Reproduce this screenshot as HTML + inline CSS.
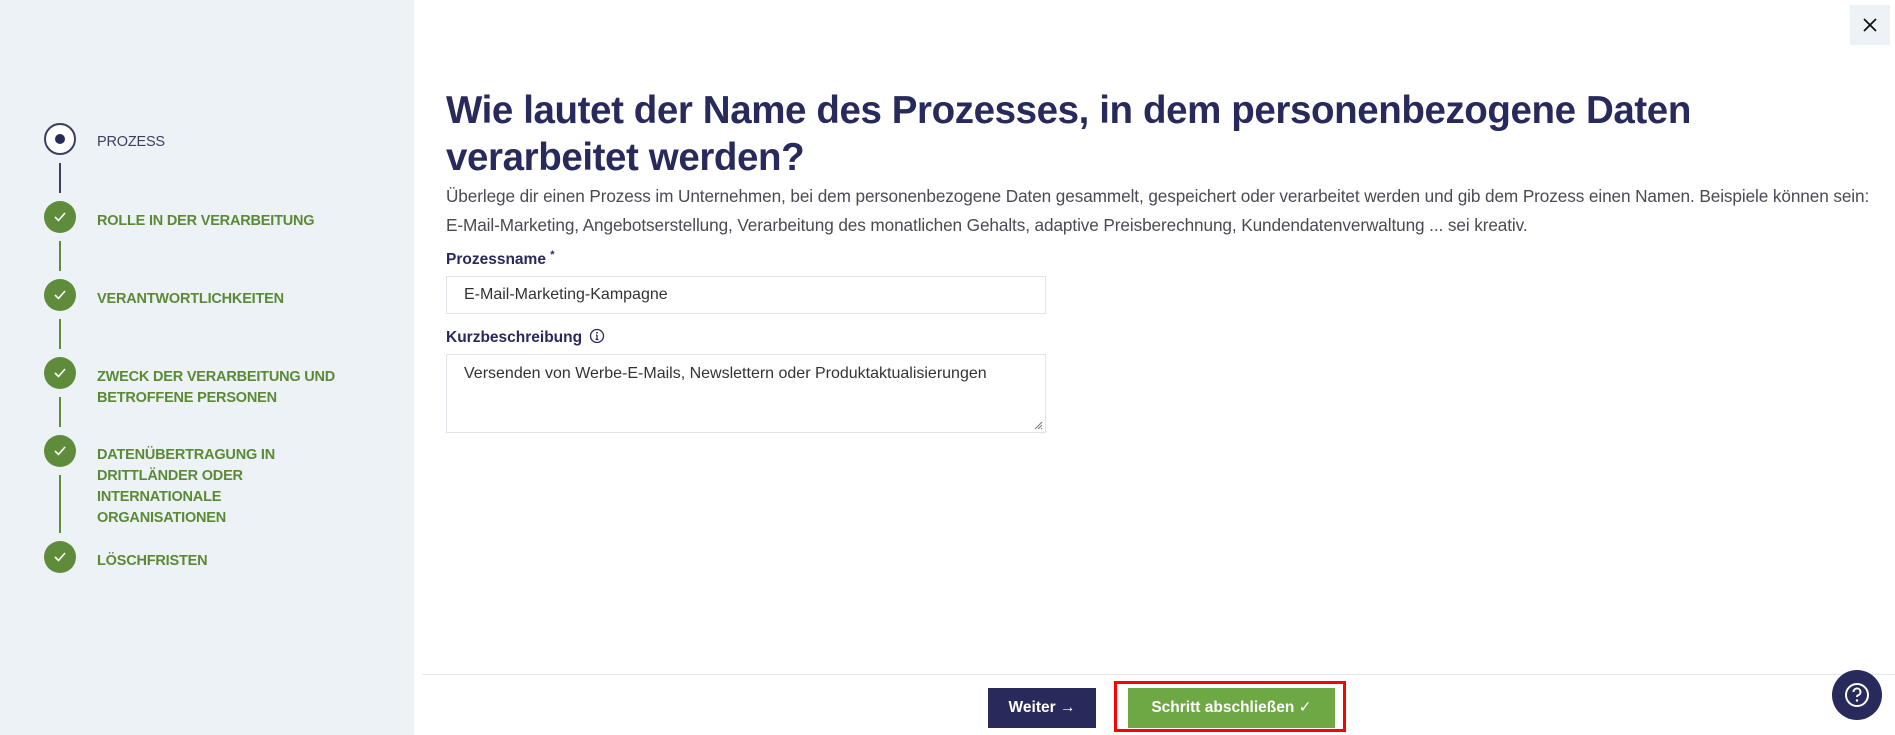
<!DOCTYPE html>
<html><head><meta charset="utf-8"><style>
*{box-sizing:border-box;margin:0;padding:0}
body{width:1895px;height:735px;overflow:hidden;background:#fff;font-family:"Liberation Sans",sans-serif;position:relative}
.side{position:absolute;left:0;top:0;width:414px;height:735px;background:#edf2f7}
.c{position:absolute;left:44px;width:32px;height:32px;border-radius:50%;background:#5e8c3a}
.c svg{position:absolute;left:9px;top:10px}
.ln{position:absolute;left:59px;width:2px;background:#5e8c3a}
.t{position:absolute;left:97px;font-size:14.5px;font-weight:bold;color:#5b8a35;line-height:21px;letter-spacing:-0.2px}
h1{position:absolute;left:446px;top:87px;font-size:38.5px;line-height:47px;color:#272a5b;font-weight:bold;letter-spacing:-0.4px}
.p{position:absolute;left:446px;top:182px;font-size:17.2px;line-height:29px;color:#4a4a55;letter-spacing:-0.1px;white-space:nowrap}
.lab{position:absolute;left:446px;font-size:15.5px;font-weight:bold;color:#272a5b}
.inp{position:absolute;left:446px;width:600px;border:1px solid #dfe3ea;font-size:16px;color:#333;padding-left:17px}
</style></head><body>
<div class="side">
 <div style="position:absolute;left:44px;top:123px;width:32px;height:32px;border-radius:50%;border:2px solid #3c3f5e;background:#fff"><div style="position:absolute;left:9px;top:9px;width:10px;height:10px;border-radius:50%;background:#272a5b"></div></div>
 <div class="t" style="top:132px;color:#3c3f5e;font-weight:normal">PROZESS</div>
 <div class="ln" style="top:163px;height:30px;background:#3c3f5e"></div>
 <div class="c" style="top:201px"><svg width="14" height="12" viewBox="0 0 14 12"><path d="M2 6l3.5 3.5L12 2" stroke="#fff" stroke-width="1.6" fill="none"/></svg></div>
 <div class="t" style="top:211px">ROLLE IN DER VERARBEITUNG</div>
 <div class="ln" style="top:241px;height:30px"></div>
 <div class="c" style="top:279px"><svg width="14" height="12" viewBox="0 0 14 12"><path d="M2 6l3.5 3.5L12 2" stroke="#fff" stroke-width="1.6" fill="none"/></svg></div>
 <div class="t" style="top:289px">VERANTWORTLICHKEITEN</div>
 <div class="ln" style="top:319px;height:30px"></div>
 <div class="c" style="top:357px"><svg width="14" height="12" viewBox="0 0 14 12"><path d="M2 6l3.5 3.5L12 2" stroke="#fff" stroke-width="1.6" fill="none"/></svg></div>
 <div class="t" style="top:367px">ZWECK DER VERARBEITUNG UND<br>BETROFFENE PERSONEN</div>
 <div class="ln" style="top:397px;height:30px"></div>
 <div class="c" style="top:435px"><svg width="14" height="12" viewBox="0 0 14 12"><path d="M2 6l3.5 3.5L12 2" stroke="#fff" stroke-width="1.6" fill="none"/></svg></div>
 <div class="t" style="top:445px">DATENÜBERTRAGUNG IN<br>DRITTLÄNDER ODER<br>INTERNATIONALE<br>ORGANISATIONEN</div>
 <div class="ln" style="top:475px;height:58px"></div>
 <div class="c" style="top:541px"><svg width="14" height="12" viewBox="0 0 14 12"><path d="M2 6l3.5 3.5L12 2" stroke="#fff" stroke-width="1.6" fill="none"/></svg></div>
 <div class="t" style="top:551px">LÖSCHFRISTEN</div>
</div>
<div style="position:absolute;left:1850px;top:5px;width:40px;height:40px;background:#edf2f7"><svg width="40" height="40"><path d="M14 14l12 12M26 14l-12 12" stroke="#111" stroke-width="1.8"/></svg></div>
<h1>Wie lautet der Name des Prozesses, in dem personenbezogene Daten<br>verarbeitet werden?</h1>
<div class="p">Überlege dir einen Prozess im Unternehmen, bei dem personenbezogene Daten gesammelt, gespeichert oder verarbeitet werden und gib dem Prozess einen Namen. Beispiele können sein:<br>E-Mail-Marketing, Angebotserstellung, Verarbeitung des monatlichen Gehalts, adaptive Preisberechnung, Kundendatenverwaltung ... sei kreativ.</div>
<div class="lab" style="top:249px">Prozessname <sup style="font-size:11px">*</sup></div>
<div class="inp" style="top:276px;height:38px;line-height:36px">E-Mail-Marketing-Kampagne</div>
<div class="lab" style="top:328px">Kurzbeschreibung <svg width="16" height="16" style="vertical-align:-2px;margin-left:3px"><circle cx="8" cy="8" r="6.5" stroke="#272a5b" stroke-width="1.3" fill="none"/><path d="M8 7v4.5M6.5 11.5h3M7 7h1" stroke="#272a5b" stroke-width="1.3"/><circle cx="8" cy="4.8" r="0.9" fill="#272a5b"/></svg></div>
<div class="inp" style="top:354px;height:79px;padding-top:9px;line-height:20px">Versenden von Werbe-E-Mails, Newslettern oder Produktaktualisierungen
<svg width="10" height="10" style="position:absolute;right:2px;bottom:2px"><path d="M9 2L2 9M9 5L5 9M9 8L8 9" stroke="#777" stroke-width="1"/></svg></div>
<div style="position:absolute;left:422px;top:674px;width:1473px;height:1px;background:#e3e6ee"></div>
<div style="position:absolute;left:988px;top:688px;width:108px;height:40px;background:#272a5b;color:#fff;font-weight:bold;font-size:15.5px;line-height:40px;text-align:center">Weiter →</div>
<div style="position:absolute;left:1114px;top:681px;width:232px;height:51px;border:3px solid #f00"></div>
<div style="position:absolute;left:1128px;top:688px;width:207px;height:40px;background:#6ea845;color:#fff;font-weight:bold;font-size:15.5px;line-height:40px;text-align:center">Schritt abschließen <span style="font-weight:normal">✓</span></div>
<div style="position:absolute;left:1832px;top:670px;width:50px;height:50px;border-radius:50%;background:#272a5b"><svg width="50" height="50"><circle cx="25" cy="25" r="11" stroke="#fff" stroke-width="2" fill="none"/><path d="M21.5 22a3.5 3.5 0 1 1 4.5 3.3c-.8.3-1 .9-1 1.7" stroke="#fff" stroke-width="2" fill="none"/><circle cx="25" cy="30.5" r="1.2" fill="#fff"/></svg></div>
</body></html>
